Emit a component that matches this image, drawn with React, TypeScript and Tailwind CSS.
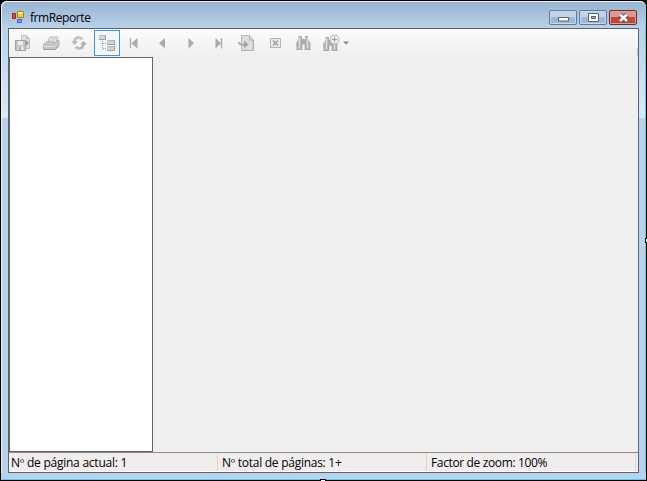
import type { ReactNode } from "react";

function Icon({ children, w = 18 }: { children: ReactNode; w?: number }) {
  return (
    <svg width={w} height="18" viewBox={`0 0 ${w} 18`} fill="none" className="shrink-0">
      {children}
    </svg>
  );
}

function ExportIcon() {
  return (
    <Icon>
      <path d="M7.500 1.500h5l3 3v10h-8z" fill="#e0e0e0" stroke="#bdbdbd" />
      <path d="M12.500 1.500v3h3" stroke="#bdbdbd" />
      <path d="M11 5.500l4 3.500-4 3.500z" fill="#9a9a9a" />
      <path d="M1.500 6.500h10v10h-10z" fill="#c6c6c6" stroke="#a3a3a3" />
      <path d="M4 7h5v4H4z" fill="#ededed" />
      <path d="M4 12.500h5.500V16H4z" fill="#e9e9e9" />
      <path d="M5 13h1.500v3H5z" fill="#959595" />
    </Icon>
  );
}
function PrintIcon() {
  return (
    <Icon>
      <path d="M5.500 8.500l2.500-5.500h8l-2.500 6z" fill="#eee" stroke="#b2b2b2" />
      <path d="M9 5h5M8 7h5" stroke="#c4c4c4" />
      <path d="M1.500 10.500l4-3 8 1.500 2.500-3 1 1v4l-4 4.500H1.500z" fill="#cacaca" stroke="#b0b0b0" />
      <path d="M2 10.500h11.500v4H2z" fill="#c0c0c0" />
      <path d="M2 12.500h11.500" stroke="#e6e6e6" />
      <path d="M2 15.500h11.500l3.500-4" stroke="#a0a0a0" />
    </Icon>
  );
}
function RefreshIcon() {
  return (
    <Icon>
      <path d="M1 7.500h2C4 2 9 1 13 4l-1.500 2C8.500 4 6.500 4.500 6 7.500h2L4.500 11z" fill="#b9b9b9" />
      <path d="M17 10.500h-2c-1 5.500-6 6.500-10 3.500l1.500-2c3 2 5 1.500 5.500-1.500h-2L13.500 7z" fill="#aeaeae" />
      <path d="M4 7c1.500-4 5-4 7.500-2.500M14 11c-1.500 4-5 4-7.500 2.500" stroke="#cfcfcf" strokeWidth=".8" />
    </Icon>
  );
}
function TreeIcon() {
  return (
    <Icon>
      <path d="M4.500 7v9M5 9.500h4M5 14.500h4" stroke="#a0a0a0" strokeDasharray="1 1" />
      <path d="M1 1h7v5H1zM9 7h8v4H9zM9 13h8v4H9z" fill="#cdcdcd" />
      <path d="M1 5.500h6.500V1M9 10.500h7.500V6M9 16.500h7.500V12" stroke="#a0a0a0" />
      <path d="M1 1.500h6M9 6.500h7M9 12.500h7" stroke="#bababa" />
      <path d="M2 2.500h5v2H2zM10 8h5v1.500h-5zM10 14h5v1.500h-5z" fill="#dadada" />
    </Icon>
  );
}
function FirstIcon() {
  return (
    <Icon>
      <path d="M4.500 4v10" stroke="#aaa" strokeWidth="1.300" />
      <path d="M11.500 4v10.500L5.500 9.200z" fill="#aaa" />
    </Icon>
  );
}
function PreviousIcon() {
  return <Icon><path d="M11 4v10.500L5 9.200z" fill="#aaa" /></Icon>;
}
function NextIcon() {
  return <Icon><path d="M6.500 4v10.500L12 9.200z" fill="#aaa" /></Icon>;
}
function LastIcon() {
  return (
    <Icon>
      <path d="M5.500 4v10.500l5.500-5.300z" fill="#aaa" />
      <path d="M11.500 4v10.500" stroke="#aaa" strokeWidth="1.300" />
    </Icon>
  );
}
function GotoIcon() {
  return (
    <Icon>
      <path d="M3.500 1.500h8l3.500 4v11H3.500z" fill="#dedede" stroke="#bbb" />
      <path d="M11.500 2v4H15M4 16.500h11.500V6" stroke="#b2b2b2" />
      <path d="M1 8c0 2.500 2 3 6 2.500" stroke="#aaa" strokeWidth="2" />
      <path d="M6 6.500l4.500 4L6 14.500z" fill="#a4a4a4" />
    </Icon>
  );
}
function CloseViewIcon() {
  return (
    <Icon>
      <path d="M4.500 4.500h10v9h-10z" fill="#ededed" stroke="#b2b2b2" />
      <path d="M7 6.500l5 5m0-5l-5 5" stroke="#a0a0a0" strokeWidth="1.600" />
    </Icon>
  );
}
function Binoculars() {
  return (
    <g>
      <path d="M4.500 2h3v3l1 2v9h-6v-3H2V9l2.500-4zM11 2h3v3l2.500 4v7h-6V7l.5-2z" fill="#bdbdbd" />
      <path d="M8 5h3v5.500H8z" fill="#acacac" />
      <path d="M4.500 2.500h3M11 2.500h3M2.500 15.500h5M11 15.500h5.500M7.500 3v12M15.500 8v7M11.500 7v8" stroke="#aaa" />
      <path d="M5.500 4v10M13.500 4v10" stroke="#dfdfdf" />
      <path d="M3.500 8v7" stroke="#b0b0b0" />
    </g>
  );
}
function SearchIcon() {
  return <Icon><Binoculars /></Icon>;
}
function ZoomIcon() {
  return (
    <Icon w={20}>
      <g transform="translate(-1 1)"><Binoculars /></g>
      <circle cx="12.500" cy="5.500" r="4.500" fill="#ededed" stroke="#b5b5b5" />
      <path d="M10 5.500h5M12.500 3v5" stroke="#999" />
    </Icon>
  );
}

const tools = [
  { name: "Exportar", icon: <ExportIcon /> },
  { name: "Imprimir", icon: <PrintIcon /> },
  { name: "Actualizar", icon: <RefreshIcon /> },
  { name: "Árbol", icon: <TreeIcon />, selected: true },
  { name: "Primera", icon: <FirstIcon /> },
  { name: "Anterior", icon: <PreviousIcon /> },
  { name: "Siguiente", icon: <NextIcon /> },
  { name: "Última", icon: <LastIcon /> },
  { name: "Ir a", icon: <GotoIcon /> },
  { name: "Cerrar vista", icon: <CloseViewIcon /> },
  { name: "Buscar", icon: <SearchIcon /> },
];

function AppIcon() {
  return (
    <svg width="14" height="14" viewBox="0 0 14 14" className="shrink-0">
      <path d="M1.500 3.500h3v5h-3z" fill="#d84530" stroke="#982b22" />
      <path d="M6.500 1.500h6v6h-6z" fill="#f8ce3f" stroke="#aa841c" />
      <path d="M7 2h5v2H7z" fill="#ffea90" />
      <path d="M6.500 9.500h4v3h-4z" fill="#6c9cec" stroke="#3c6dbe" />
    </svg>
  );
}

function CaptionButtons() {
  return (
    <div className="flex gap-[2px]">
      <button aria-label="Minimizar" className="flex h-[15px] w-[28px] items-center justify-center rounded-[2px] border border-[#617995] bg-linear-to-b from-[#c0d3e9] from-45% to-[#9db9d7] to-50% shadow-[inset_0_0_0_1px_#c6d9ed]">
        <svg width="13" height="11"><path d="M1.500 5.500h10v3.500h-10z" fill="#fff" stroke="#536171" /></svg>
      </button>
      <button aria-label="Maximizar" className="flex h-[15px] w-[28px] items-center justify-center rounded-[2px] border border-[#617995] bg-linear-to-b from-[#c0d3e9] from-45% to-[#9db9d7] to-50% shadow-[inset_0_0_0_1px_#c6d9ed]">
        <svg width="13" height="11"><path d="M1.500 1.500h10v8h-10z" fill="#fff" stroke="#536171" /><path d="M4.500 4.500h4v2h-4z" fill="#9fb9d4" stroke="#536171" /></svg>
      </button>
      <button aria-label="Cerrar" className="flex h-[15px] w-[28px] items-center justify-center rounded-[2px] border border-[#652e32] bg-linear-to-b from-[#dd998d] from-45% to-[#bd4936] to-50% shadow-[inset_0_0_0_1px_#dfa091]">
        <svg width="13" height="11" fill="none"><path d="M3 2.500l7 6.500m0-6.500L3 9" stroke="#68464c" strokeWidth="4.600" /><path d="M3 2.500l7 6.500m0-6.500L3 9" stroke="#fff" strokeWidth="2.800" /></svg>
      </button>
    </div>
  );
}

export default function App() {
  return (
    <div className="relative h-[481px] w-[647px] overflow-hidden bg-black font-['Open_Sans','Noto_Sans',sans-serif] text-[12px] text-black">
      <div className="flex h-full flex-col rounded-t-[7px] border border-black bg-[#b9d1ea] shadow-[inset_1px_1px_0_#edf5fc,inset_-1px_-1px_0_#5acbed]">
        <header className="flex h-[27px] shrink-0 items-start justify-between rounded-t-[6px] border-t border-l border-r border-[#eaf3fb] border-r-[#72d4f4] bg-linear-to-b from-[#99b4d1] to-[#b9d1ea] pr-[8px] pl-[9px]">
          <div className="flex items-start gap-[5px] pt-[8px]">
            <AppIcon />
            <h1 className="h-[16px] text-[12px] leading-[16px] tracking-[-0.42px]">frmReporte</h1>
          </div>
          <div className="pt-[8px]"><CaptionButtons /></div>
        </header>
        <div className="flex min-h-0 flex-1">
          <div className="w-[7px] border-l border-[#edf5fc] bg-linear-to-b from-[#b9d1ea] to-[#dae8f6] to-[89px] pt-[90px]">
            <div className="h-full bg-[#b9d1ea]" />
          </div>
          <main className="flex h-[445px] w-[631px] flex-col border border-[#596471] bg-[#efefef]">
            <nav className="flex h-[28px] shrink-0 items-start bg-linear-to-b from-[#fcfcfc] to-[#efefef] pt-px">
              {tools.map((tool) => (
                <button key={tool.name} aria-label={tool.name} className={tool.selected ? "mx-px flex h-[26px] w-[26px] items-center justify-center border border-[#4595d6] bg-[#f2f8fa]" : "flex h-[26px] w-[28px] items-center justify-center"}>
                  {tool.icon}
                </button>
              ))}
              <button aria-label="Zoom" className="flex h-[26px] items-center gap-px pl-[5px]">
                <ZoomIcon />
                <svg width="6" height="4"><path d="M0 .5h6l-3 3z" fill="#848484" /></svg>
              </button>
              <div className="mt-[18px] ml-auto h-[8px] w-px bg-[#c4c8cc]" />
            </nav>
            <div className="flex h-[395px] shrink-0">
              <aside className="w-[144px] border border-[#646464] bg-white" />
              <section className="flex-1 bg-[#efefef]" />
            </div>
            <footer className="flex h-[20px] shrink-0 border-t border-b border-t-[#8c8c8c] border-b-white bg-[#f0edec] pr-[2px] leading-[20px] whitespace-nowrap">
              <span className="w-[209px] border-r border-[#d7d5d5] pl-[2px] tracking-[-0.24px]">Nº de página actual: 1</span>
              <span className="w-[209px] border-r border-[#d7d5d5] pl-[4px] tracking-[-0.27px]">Nº total de páginas: 1+</span>
              <span className="flex-1 border-r border-[#d7d5d5] pl-[4px] tracking-[-0.36px]">Factor de zoom: 100%</span>
            </footer>
          </main>
          <div className="w-[7px] border-r border-[#52cfee] bg-linear-to-b from-[#b9d1ea] to-[#dae8f6] to-[89px] pt-[90px]">
            <div className="h-full bg-[#b9d1ea]" />
          </div>
        </div>
        <div className="h-[7px] shrink-0 border-b border-[#52cfee] bg-[#b9d1ea]" />
      </div>
      <div className="absolute top-[238px] right-0 h-[5px] w-[2px] border border-r-0 border-black bg-white" />
      <div className="absolute bottom-0 left-[320px] h-[2px] w-[6px] border border-b-0 border-black bg-white" />
    </div>
  );
}
